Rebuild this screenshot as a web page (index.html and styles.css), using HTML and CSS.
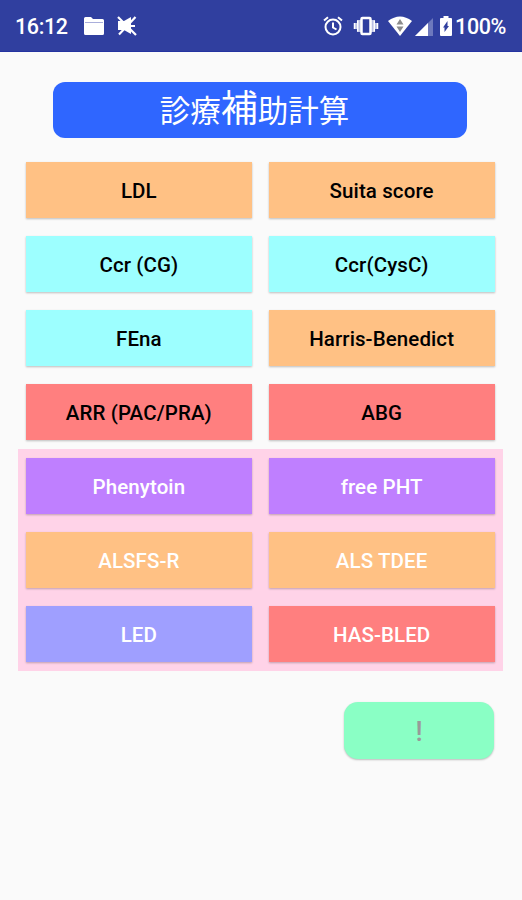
FILE: index.html
```html
<!DOCTYPE html>
<html lang="ja">

<head>
  <meta charset="UTF-8" />
  <meta name="viewport" content="width=device-width, initial-scale=1.0" />
  <title>診療補助計算</title>
  <link rel="stylesheet" href="styles.css">
</head>

<body>
  <header class="status-bar">
    <span class="time">16:12</span>
    <!-- folder -->
    <svg class="icon-folder" width="20" height="18" viewBox="0 0 20 18">
      <path fill="#fff" d="M0 1.5Q0 0 1.5 0H7l2 2h9.500q1.500 0 1.500 1.500v13q0 1.500-1.500 1.500h-17Q0 18 0 16.500z" />
      <path stroke="#a9aedb" d="M1 5.500h18" />
    </svg>
    <!-- muted -->
    <svg class="icon-mute" width="20" height="20" viewBox="0 0 20 20">
      <path fill="#fff" d="M1 5h6l7-4v17l-7-4H1z" />
      <path stroke="#fff" stroke-width="2.200" d="M1 1l18 18M18.500 1L2 18.500M14 10h4" />
    </svg>
    <div class="status-right">
      <!-- alarm -->
      <svg class="icon-alarm" width="20" height="20" viewBox="0 0 20 20" fill="none" stroke="#fff" stroke-width="2">
        <circle cx="10" cy="11" r="7.500" />
        <path d="M1 4.500l4-3.300M19 4.500l-4-3.300M10 6.500v5l3.500 2" />
      </svg>
      <!-- vibrate -->
      <svg class="icon-vibrate" width="26" height="20" viewBox="0 0 26 20">
        <path fill="#b9bfe3" d="M1 7h3v6H1zM4 4h4v12H4zM18 4h4v12h-4zM22 7h3v6h-3z" />
        <path stroke="#fff" stroke-width="1.500" d="M1.500 7v6M4.700 4.500v11M21.300 4.500v11M24.500 7v6" />
        <rect x="8.500" y="2" width="9" height="16" rx="1" fill="#303f9f" stroke="#fff" stroke-width="2.500" />
      </svg>
      <!-- wifi -->
      <svg class="icon-wifi" width="24" height="20" viewBox="0 0 24 20">
        <path fill="#fff" d="M0 5Q12-4 24 5L12 20z" />
        <path fill="#8c8c8c" d="M12 3l3.500 5.500h-7zM8.500 10.500h7L12 16z" />
      </svg>
      <!-- signal -->
      <svg class="icon-signal" width="18" height="18" viewBox="0 0 18 18">
        <path fill="#6d78bd" d="M18 0v18H0z" />
        <path fill="#fff" d="M13 5v13H0z" />
      </svg>
      <!-- battery -->
      <svg class="icon-battery" width="12" height="20" viewBox="0 0 12 20">
        <path fill="#fff" d="M3.500 0h5v2H11q1 0 1 1v16q0 1-1 1H1q-1 0-1-1V3q0-1 1-1h2.500z" />
        <path fill="#303f9f" d="M7.500 5v5h1.500L4.500 16v-4.500H3z" />
      </svg>
      <span class="percent">100%</span>
    </div>
  </header>

  <main>
    <h1 class="title">診療<span>補</span>助計算</h1>

    <div class="grid">
      <button class="orange">LDL</button>
      <button class="orange">Suita score</button>
      <button class="cyan">Ccr (CG)</button>
      <button class="cyan">Ccr(CysC)</button>
      <button class="cyan">FEna</button>
      <button class="orange">Harris-Benedict</button>
      <button class="red">ARR (PAC/PRA)</button>
      <button class="red">ABG</button>
    </div>

    <div class="grid neuro">
      <button class="purple">Phenytoin</button>
      <button class="purple">free PHT</button>
      <button class="orange">ALSFS-R</button>
      <button class="orange">ALS TDEE</button>
      <button class="blue">LED</button>
      <button class="red">HAS-BLED</button>
    </div>

    <button class="info">!</button>
  </main>
</body>

</html>
```
FILE: styles.css
```css
* {
  box-sizing: border-box;
}

body {
  margin: 0;
  min-height: 900px;
  background: #fafafa;
  font-family: Roboto, "Noto Sans CJK JP", sans-serif;
}

.status-bar {
  display: flex;
  align-items: center;
  height: 52px;
  padding: 1px 16px 0 15px;
  background: #303f9f;
  border-bottom: 1px solid #2433a0;
  color: #fff;
  font-size: 21.5px;
  font-weight: 500;
  letter-spacing: -0.4px;
}

.status-bar svg {
  display: block;
  flex: none;
}

.time {
  width: 69px;
}

.icon-mute {
  margin-left: 13px;
}

.status-right {
  display: flex;
  align-items: center;
  margin-left: auto;
}

.icon-vibrate {
  margin-left: 10px;
}

.icon-wifi {
  margin-left: 9px;
}

.icon-signal {
  margin: 2px 0 0 3px;
}

.icon-battery {
  margin: 0 3px 0 7px;
}

main {
  display: flex;
  flex-direction: column;
  padding: 30px 19px 0 18px;
}

.title {
  display: flex;
  justify-content: center;
  align-items: baseline;
  height: 56px;
  margin: 0 36px 15px 35px;
  padding-right: 11px;
  border-radius: 12px;
  background: #2f66ff;
  color: #fff;
  font-family: "Noto Sans CJK JP", sans-serif;
  font-size: 30.5px;
  font-weight: 400;
  line-height: 48px;
}

.title span {
  font-size: 37px;
}

.grid {
  display: grid;
  grid-template-columns: 1fr 1fr;
  grid-auto-rows: 56px;
  gap: 18px 17px;
  padding: 9px 8.500px 9px 8px;
}

.neuro {
  background: #ffd3e8;
}

button {
  padding: 2px 0 0;
  border: none;
  border-radius: 0;
  color: #000;
  font-family: Roboto, sans-serif;
  font-size: 20.5px;
  font-weight: 500;
  letter-spacing: 0.1px;
  box-shadow: 0 1px 2px rgba(0, 0, 0, 0.25);
}

.neuro button {
  color: #fff;
}

.orange {
  background: #ffc184;
}

.cyan {
  background: #9dffff;
}

.red {
  background: #ff7f7f;
}

.purple {
  background: #bf7fff;
}

.blue {
  background: #9f9fff;
}

.info {
  align-self: flex-end;
  width: 150px;
  height: 57px;
  margin: 31px 9px 0 0;
  border-radius: 14px;
  background: #8affc5;
  color: #999;
  font-size: 27px;
}
```
